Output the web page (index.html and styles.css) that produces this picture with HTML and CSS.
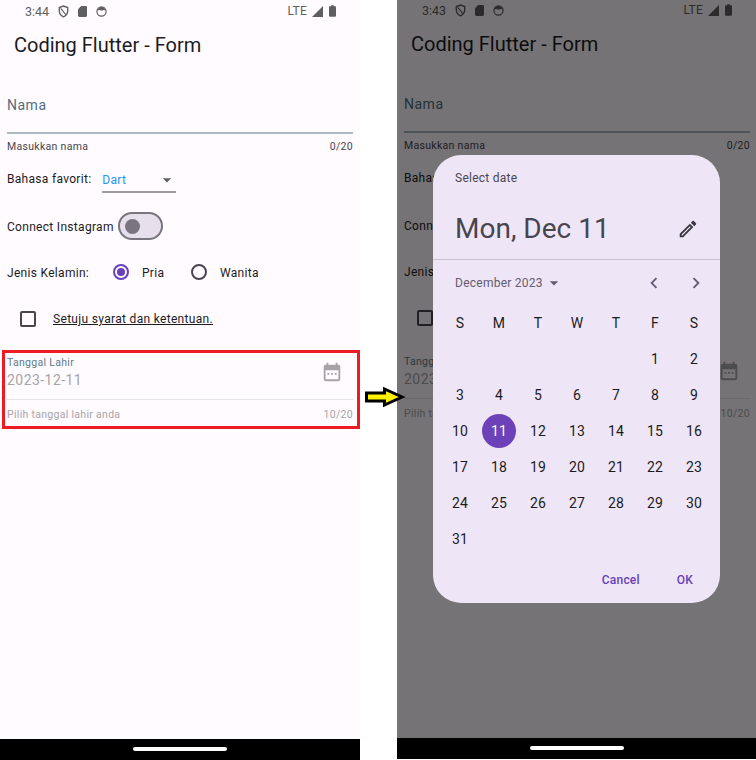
FILE: index.html
```html
<!DOCTYPE html>
<html lang="en">
  <head>
    <meta charset="UTF-8" />
    <meta name="viewport" content="width=device-width, initial-scale=1.0" />
    <title>Coding Flutter - Form</title>
    <link rel="stylesheet" href="styles.css">
  </head>
  <body>
    <svg class="sprite" xmlns="http://www.w3.org/2000/svg">
      <symbol id="shield" viewBox="0 0 12 14"><path fill="none" stroke="currentColor" stroke-width="1.5" d="M6 1l4.6 1.7v3.6c0 3-1.9 5.4-4.6 6.5C3.300 11.700 1.400 9.300 1.400 6.300V2.700z"/><path stroke="currentColor" stroke-width="1.2" d="M3 3.500l5.500 7"/></symbol>
      <symbol id="sdcard" viewBox="0 0 10 12"><path fill="currentColor" d="M3.500 0H8.500C9.300 0 10 .7 10 1.500v9c0 .8-.7 1.500-1.500 1.500h-7C.7 12 0 11.300 0 10.500V3.500z"/></symbol>
      <symbol id="face" viewBox="0 0 12 12"><circle cx="6" cy="6" r="5" fill="none" stroke="currentColor" stroke-width="1.300"/><path fill="currentColor" d="M1.500 5.200C2 2.600 3.800 1 6 1s4 1.600 4.500 4.200c-1.200-.9-2.300-1-3-.3H5c-1-.8-2.300-.6-3.500.3z"/></symbol>
      <symbol id="signal" viewBox="0 0 12 12"><path fill="currentColor" d="M12 0v12H0z"/></symbol>
      <symbol id="battery" viewBox="0 0 8 13"><path fill="currentColor" d="M2.500 0h3v1.200H7c.6 0 1 .4 1 1V12c0 .6-.4 1-1 1H1c-.6 0-1-.4-1-1V2.200c0-.6.4-1 1-1h1.500z"/></symbol>
      <symbol id="arrow-drop" viewBox="0 0 24 24"><path fill="currentColor" d="M7 10l5 5 5-5z"/></symbol>
      <symbol id="calendar" viewBox="0 0 24 24"><path fill="currentColor" d="M19 4h-1V2h-2v2H8V2H6v2H5c-1.100 0-2 .9-2 2v14c0 1.100.9 2 2 2h14c1.100 0 2-.9 2-2V6c0-1.100-.9-2-2-2zm0 16H5V10h14v10zM7 13h2v2H7zm4 0h2v2h-2zm4 0h2v2h-2z"/></symbol>
      <symbol id="edit" viewBox="0 0 24 24"><path fill="currentColor" d="M3 17.250V21h3.750L17.810 9.940l-3.750-3.750L3 17.250zM5.920 19H5v-.92l9.060-9.060.92.92L5.920 19zM20.710 5.630l-2.340-2.340c-.2-.2-.45-.29-.71-.29s-.51.1-.7.29l-1.830 1.830 3.750 3.750 1.830-1.830c.39-.39.39-1.020 0-1.410z"/></symbol>
      <symbol id="chevron-left" viewBox="0 0 24 24"><path fill="currentColor" d="M15.410 7.410L14 6l-6 6 6 6 1.410-1.410L10.830 12z"/></symbol>
      <symbol id="chevron-right" viewBox="0 0 24 24"><path fill="currentColor" d="M8.590 16.590L10 18l6-6-6-6-1.410 1.410L13.170 12z"/></symbol>
    </svg>

    <div class="page">
      <!-- left phone -->
      <div class="phone">
        <div class="screen">
          <div class="status">
            <span class="clock">3:44</span>
            <svg class="ic-shield"><use href="#shield"/></svg>
            <svg class="ic-sd"><use href="#sdcard"/></svg>
            <svg class="ic-face"><use href="#face"/></svg>
            <span class="status-right">
              <span class="lte">LTE</span>
              <svg class="ic-signal"><use href="#signal"/></svg>
              <svg class="ic-battery"><use href="#battery"/></svg>
            </span>
          </div>
          <div class="appbar">Coding Flutter - Form</div>
          <div class="form">
            <div class="name-label">Nama</div>
            <div class="name-line"></div>
            <div class="helper"><span>Masukkan nama</span><span>0/20</span></div>
            <div class="row row-lang">
              <span>Bahasa favorit:</span>
              <span class="dropdown">Dart<svg><use href="#arrow-drop"/></svg></span>
            </div>
            <div class="row row-switch">
              <span class="row-text">Connect Instagram</span>
              <span class="switch"><span class="thumb"></span></span>
            </div>
            <div class="row row-radio">
              <span class="radio-title row-text">Jenis Kelamin:</span>
              <span class="radio checked"></span><span class="radio-text row-text">Pria</span>
              <span class="radio"></span><span class="radio-text row-text">Wanita</span>
            </div>
            <div class="row row-check">
              <span class="checkbox"></span>
              <span class="terms">Setuju syarat dan ketentuan.</span>
            </div>
            <div class="date-field">
              <div class="date-top">
                <div>
                  <div class="date-label">Tanggal Lahir</div>
                  <div class="date-value">2023-12-11</div>
                </div>
                <svg class="date-icon"><use href="#calendar"/></svg>
              </div>
              <div class="date-line"></div>
              <div class="helper helper-off"><span>Pilih tanggal lahir anda</span><span>10/20</span></div>
            </div>
          </div>
        </div>
        <div class="navbar"><span class="home-bar"></span></div>
        <div class="red-box"></div>
      </div>

      <!-- right phone, with date dialog open -->
      <div class="phone phone-right">
        <div class="screen">
          <div class="status">
            <span class="clock">3:43</span>
            <svg class="ic-shield"><use href="#shield"/></svg>
            <svg class="ic-sd"><use href="#sdcard"/></svg>
            <svg class="ic-face"><use href="#face"/></svg>
            <span class="status-right">
              <span class="lte">LTE</span>
              <svg class="ic-signal"><use href="#signal"/></svg>
              <svg class="ic-battery"><use href="#battery"/></svg>
            </span>
          </div>
          <div class="appbar">Coding Flutter - Form</div>
          <div class="form">
            <div class="name-label">Nama</div>
            <div class="name-line"></div>
            <div class="helper"><span>Masukkan nama</span><span>0/20</span></div>
            <div class="row row-lang">
              <span>Bahasa favorit:</span>
              <span class="dropdown">Dart<svg><use href="#arrow-drop"/></svg></span>
            </div>
            <div class="row row-switch">
              <span class="row-text">Connect Instagram</span>
              <span class="switch"><span class="thumb"></span></span>
            </div>
            <div class="row row-radio">
              <span class="radio-title row-text">Jenis Kelamin:</span>
              <span class="radio checked"></span><span class="radio-text row-text">Pria</span>
              <span class="radio"></span><span class="radio-text row-text">Wanita</span>
            </div>
            <div class="row row-check">
              <span class="checkbox"></span>
              <span class="terms">Setuju syarat dan ketentuan.</span>
            </div>
            <div class="date-field">
              <div class="date-top">
                <div>
                  <div class="date-label">Tanggal Lahir</div>
                  <div class="date-value">2023-12-11</div>
                </div>
                <svg class="date-icon"><use href="#calendar"/></svg>
              </div>
              <div class="date-line"></div>
              <div class="helper helper-off"><span>Pilih tanggal lahir anda</span><span>10/20</span></div>
            </div>
          </div>
          <div class="scrim"></div>
          <div class="dialog">
            <div class="dialog-head">
              <div class="dialog-title">Select date</div>
              <div class="dialog-date">
                <span>Mon, Dec 11</span>
                <svg><use href="#edit"/></svg>
              </div>
            </div>
            <div class="month-row">
              <span class="month">December 2023<svg><use href="#arrow-drop"/></svg></span>
              <span class="month-nav">
                <svg><use href="#chevron-left"/></svg>
                <svg><use href="#chevron-right"/></svg>
              </span>
            </div>
            <div class="cal">
              <span class="wd">S</span><span class="wd">M</span><span class="wd">T</span><span class="wd">W</span><span class="wd">T</span><span class="wd">F</span><span class="wd">S</span>
              <span></span><span></span><span></span><span></span><span></span><span>1</span><span>2</span>
              <span>3</span><span>4</span><span>5</span><span>6</span><span>7</span><span>8</span><span>9</span>
              <span>10</span><span class="today"><b>11</b></span><span>12</span><span>13</span><span>14</span><span>15</span><span>16</span>
              <span>17</span><span>18</span><span>19</span><span>20</span><span>21</span><span>22</span><span>23</span>
              <span>24</span><span>25</span><span>26</span><span>27</span><span>28</span><span>29</span><span>30</span>
              <span>31</span>
            </div>
            <div class="actions"><span class="btn-cancel">Cancel</span><span class="btn-ok">OK</span></div>
          </div>
        </div>
        <div class="navbar"><span class="home-bar"></span></div>
      </div>

      <svg class="big-arrow" viewBox="0 0 41 22"><path fill="#fff200" stroke="#000" stroke-width="3" d="M1.500 7H19.500V3L37 11 19.500 19V15H1.500z"/></svg>
    </div>
  </body>
</html>
```

FILE: styles.css
```css
* {
  box-sizing: border-box;
}

body {
  margin: 0;
  background: #fff;
  font-family: Roboto, "Liberation Sans", sans-serif;
  color: #1c1b1f;
}

.sprite {
  display: none;
}

.page {
  position: relative;
  display: flex;
  justify-content: space-between;
  width: 756px;
  height: 760px;
  overflow: hidden;
}

.phone {
  position: relative;
  display: flex;
  flex-direction: column;
  width: 360px;
  height: 760px;
}

.phone-right {
  width: 359px;
  height: 759px;
}

.screen {
  position: relative;
  flex: 1;
  background: #fffbfe;
  overflow: hidden;
}

.navbar {
  display: flex;
  justify-content: center;
  height: 21px;
  padding-top: 8px;
  background: #000;
}

.home-bar {
  width: 94px;
  height: 4px;
  border-radius: 2px;
  background: #fff;
}

/* status bar */
.status {
  display: flex;
  align-items: center;
  height: 22px;
  padding: 0 24px 0 25px;
  color: #5f5f5f;
}

.phone-right .status {
  height: 20px;
  margin-bottom: 1px;
}

.clock {
  width: 33px;
  font-size: 12.5px;
}

.ic-shield {
  width: 11px;
  height: 13px;
}

.ic-sd {
  width: 9px;
  height: 11px;
  margin-left: 9px;
}

.ic-face {
  width: 11px;
  height: 11px;
  margin-left: 9px;
}

.status-right {
  display: flex;
  align-items: center;
  margin-left: auto;
}

.lte {
  font-size: 12px;
  letter-spacing: 0.2px;
}

.ic-signal {
  width: 11px;
  height: 11px;
  margin-left: 5px;
}

.ic-battery {
  width: 7px;
  height: 12px;
  margin-left: 6px;
}

.appbar {
  height: 44px;
  padding: 12px 0 0 14px;
  font-size: 20px;
  line-height: 23px;
}

/* form */
.form {
  padding: 0 7px;
  font-size: 12px;
  letter-spacing: 0.3px;
}

.phone-right .form {
  padding-right: 6px;
}

.name-label {
  margin-top: 29px;
  font-size: 14px;
  line-height: 20px;
  letter-spacing: 0.5px;
  color: #4f6f80;
}

.name-line {
  height: 2px;
  margin-top: 17px;
  background: #a9bac0;
}

.helper {
  display: flex;
  justify-content: space-between;
  margin-top: 5px;
  font-size: 10.5px;
  line-height: 16px;
  letter-spacing: 0.3px;
  color: #49454f;
}

.row {
  display: flex;
  align-items: center;
}

.row-text {
  padding-top: 2px;
}

.row-lang {
  height: 46px;
  margin-top: 1px;
}

.dropdown {
  display: flex;
  align-items: center;
  justify-content: space-between;
  width: 74px;
  height: 26px;
  margin: 1px 0 -1px 11px;
  padding-top: 2px;
  border-bottom: 2px solid #9e9e9e;
  color: #2196f3;
}

.dropdown svg {
  width: 20px;
  height: 20px;
  margin-right: -1px;
  color: #616161;
}

.row-switch {
  height: 48px;
}

.switch {
  display: flex;
  align-items: center;
  width: 45px;
  height: 28px;
  margin-left: 4px;
  padding-left: 5px;
  border: 2px solid #79747e;
  border-radius: 14px;
  background: #e7e0ec;
}

.thumb {
  width: 15px;
  height: 15px;
  border-radius: 50%;
  background: #79747e;
}

.row-radio {
  height: 44px;
}

.radio-title {
  width: 106px;
}

.radio {
  display: flex;
  align-items: center;
  justify-content: center;
  width: 16px;
  height: 16px;
  border: 2px solid #49454f;
  border-radius: 50%;
}

.checked {
  border-color: #6741b8;
}

.checked::after {
  content: "";
  width: 8px;
  height: 8px;
  border-radius: 50%;
  background: #6741b8;
}

.radio-text {
  width: 62px;
  padding-left: 13px;
}

.radio-text:last-child {
  width: auto;
}

.row-check {
  height: 49px;
  padding-left: 13px;
  padding-top: 1px;
}

.checkbox {
  width: 16px;
  height: 16px;
  margin-top: -1px;
  border: 2px solid #49454f;
  border-radius: 2px;
}

.terms {
  margin-left: 17px;
  font-size: 12px;
  letter-spacing: 0.32px;
  text-decoration: underline;
}

.date-field {
  padding-top: 12px;
}

.date-top {
  display: flex;
  align-items: center;
  justify-content: space-between;
}

.date-label {
  font-size: 10.5px;
  line-height: 16px;
  letter-spacing: 0.3px;
  color: #5d7a88;
}

.date-value {
  font-size: 14px;
  line-height: 19px;
  letter-spacing: 0.45px;
  color: #a6a4a8;
}

.date-icon {
  width: 22px;
  height: 22px;
  margin: -2px 10px 0 0;
  color: #a6a4a8;
}

.date-line {
  height: 1px;
  margin-top: 9px;
  background: #e7e3e7;
}

.helper-off {
  margin-top: 7px;
  color: #a6a4a8;
}

/* annotation */
.red-box {
  position: absolute;
  top: 350px;
  left: 2px;
  width: 358px;
  height: 79px;
  border: 3px solid #ed1c24;
}

.big-arrow {
  position: absolute;
  top: 386px;
  left: 365px;
  width: 41px;
  height: 22px;
}

/* dialog */
.scrim {
  position: absolute;
  top: 0;
  left: 0;
  width: 100%;
  height: 100%;
  background: rgba(0, 0, 0, 0.54);
}

.dialog {
  position: absolute;
  top: 155px;
  left: 36px;
  width: 287px;
  height: 448px;
  border-radius: 28px;
  background: #eee6f6;
}

.dialog-head {
  height: 105px;
  padding: 15px 22px 0 22px;
  border-bottom: 1px solid #c8c2cc;
}

.dialog-title {
  font-size: 12px;
  line-height: 17px;
  letter-spacing: 0.25px;
  color: #49454f;
}

.dialog-date {
  display: flex;
  align-items: center;
  justify-content: space-between;
  margin-top: 23px;
  font-size: 28px;
  line-height: 38px;
  color: #49454f;
}

.dialog-date svg {
  width: 22px;
  height: 22px;
  margin-right: -1px;
  color: #3a3640;
}

.month-row {
  display: flex;
  align-items: center;
  justify-content: space-between;
  height: 45px;
  padding: 0 13px 0 22px;
}

.month {
  display: flex;
  align-items: center;
  font-size: 12px;
  letter-spacing: 0.25px;
  color: #625b71;
}

.month svg {
  width: 20px;
  height: 20px;
  margin-left: 1px;
}

.month-nav {
  display: flex;
  gap: 20px;
  color: #625b71;
}

.month-nav svg {
  width: 22px;
  height: 22px;
}

.cal {
  display: grid;
  grid-template-columns: repeat(7, 39px);
  grid-auto-rows: 36px;
  height: 252px;
  padding-left: 7.5px;
  font-size: 14px;
  letter-spacing: 0.25px;
}

.cal span {
  display: flex;
  align-items: center;
  justify-content: center;
}

.cal .wd {
  color: #1c1b1f;
}

.today b {
  display: flex;
  align-items: center;
  justify-content: center;
  width: 34px;
  height: 34px;
  border-radius: 50%;
  background: #6d42b9;
  font-weight: 400;
  color: #fff;
}

.actions {
  display: flex;
  align-items: center;
  justify-content: flex-end;
  height: 46px;
  padding-right: 27px;
  font-size: 12px;
  font-weight: 500;
  letter-spacing: 0.2px;
  color: #6741b8;
}

.btn-ok {
  margin-left: 37px;
}
```
